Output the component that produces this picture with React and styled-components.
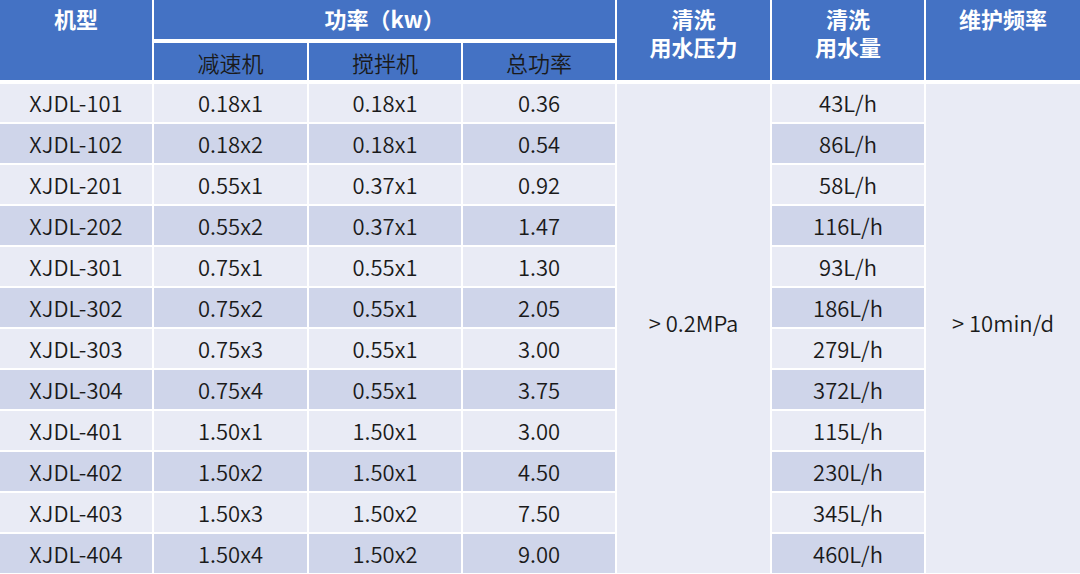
import React from 'react';
import styled, { createGlobalStyle } from 'styled-components';

const rows = [
  ['XJDL-101', '0.18x1', '0.18x1', '0.36', '43L/h'],
  ['XJDL-102', '0.18x2', '0.18x1', '0.54', '86L/h'],
  ['XJDL-201', '0.55x1', '0.37x1', '0.92', '58L/h'],
  ['XJDL-202', '0.55x2', '0.37x1', '1.47', '116L/h'],
  ['XJDL-301', '0.75x1', '0.55x1', '1.30', '93L/h'],
  ['XJDL-302', '0.75x2', '0.55x1', '2.05', '186L/h'],
  ['XJDL-303', '0.75x3', '0.55x1', '3.00', '279L/h'],
  ['XJDL-304', '0.75x4', '0.55x1', '3.75', '372L/h'],
  ['XJDL-401', '1.50x1', '1.50x1', '3.00', '115L/h'],
  ['XJDL-402', '1.50x2', '1.50x1', '4.50', '230L/h'],
  ['XJDL-403', '1.50x3', '1.50x2', '7.50', '345L/h'],
  ['XJDL-404', '1.50x4', '1.50x2', '9.00', '460L/h'],
];

const GlobalStyle = createGlobalStyle`
  html, body {
    margin: 0;
    padding: 0;
    background: #ffffff;
  }
  body {
    font-family: "Noto Sans CJK SC", "Noto Sans", sans-serif;
  }
`;

const Table = styled.table`
  width: 1080px;
  table-layout: fixed;
  border-collapse: collapse;
  font-size: 22px;
  font-weight: 350;
  color: #1a1a1a;
`;

const HeadRow = styled.tr`
  height: ${(p) => p.$h}px;
`;

const HeadCell = styled.th`
  background: #4472c4;
  color: #ffffff;
  font-weight: 700;
  text-align: center;
  vertical-align: top;
  padding: 4px 0 0;
  line-height: 28px;
  border: 2px solid #ffffff;
  border-top: none;
  border-bottom-width: ${(p) => (p.$thick ? 4 : 2)}px;
  &:first-child {
    border-left: none;
  }
  &:last-child {
    border-right: none;
  }
`;

const SubCell = styled.th`
  background: #4472c4;
  color: #1a1a1a;
  font-weight: 350;
  text-align: center;
  vertical-align: middle;
  padding: 0;
  border: 2px solid #ffffff;
  border-bottom-width: 4px;
`;

const Row = styled.tr`
  height: 41px;
`;

const Cell = styled.td`
  background: ${(p) => (p.$dark ? '#cfd5ea' : '#e9ebf5')};
  text-align: center;
  vertical-align: middle;
  padding: 0 0 2px;
  line-height: 1;
  border: 2px solid #ffffff;
  &:first-child {
    border-left: none;
  }
  &:last-child {
    border-right: none;
  }
`;

const Merged = styled(Cell)`
  background: #e9ebf5;
  padding-bottom: 14px;
`;

const Line = styled.div``;

export default function App() {
  return (
    <>
      <GlobalStyle />
      <Table>
        <colgroup>
          <col style={{ width: 153 }} />
          <col style={{ width: 155 }} />
          <col style={{ width: 154 }} />
          <col style={{ width: 154 }} />
          <col style={{ width: 155 }} />
          <col style={{ width: 154 }} />
          <col style={{ width: 155 }} />
        </colgroup>
        <thead>
          <HeadRow $h={41}>
            <HeadCell rowSpan={2} $thick>机型</HeadCell>
            <HeadCell colSpan={3} $thick>功率（kw）</HeadCell>
            <HeadCell rowSpan={2} $thick>
              <Line>清洗</Line>
              <Line>用水压力</Line>
            </HeadCell>
            <HeadCell rowSpan={2} $thick>
              <Line>清洗</Line>
              <Line>用水量</Line>
            </HeadCell>
            <HeadCell rowSpan={2} $thick>维护频率</HeadCell>
          </HeadRow>
          <HeadRow $h={41}>
            <SubCell>减速机</SubCell>
            <SubCell>搅拌机</SubCell>
            <SubCell>总功率</SubCell>
          </HeadRow>
        </thead>
        <tbody>
          {rows.map((r, i) => (
            <Row key={r[0]}>
              <Cell $dark={i % 2 === 1}>{r[0]}</Cell>
              <Cell $dark={i % 2 === 1}>{r[1]}</Cell>
              <Cell $dark={i % 2 === 1}>{r[2]}</Cell>
              <Cell $dark={i % 2 === 1}>{r[3]}</Cell>
              {i === 0 && <Merged rowSpan={rows.length}>&gt; 0.2MPa</Merged>}
              <Cell $dark={i % 2 === 1}>{r[4]}</Cell>
              {i === 0 && <Merged rowSpan={rows.length}>&gt; 10min/d</Merged>}
            </Row>
          ))}
        </tbody>
      </Table>
    </>
  );
}
